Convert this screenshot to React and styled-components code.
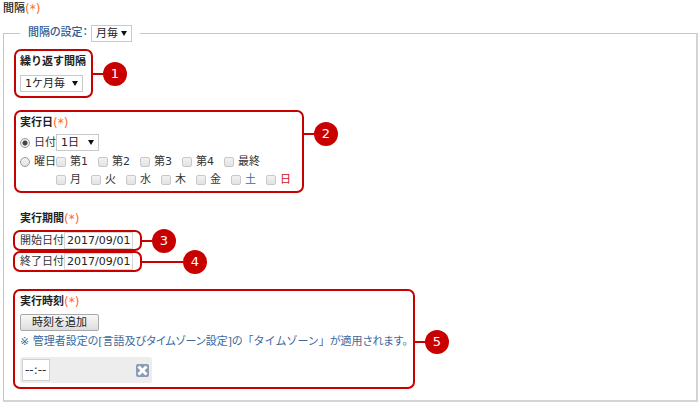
import React from "react";
import styled, { createGlobalStyle } from "styled-components";

const GlobalStyle = createGlobalStyle`
  * {
    box-sizing: border-box;
  }

  body {
    margin: 0;
    background: #ffffff;
  }

  body,
  input,
  select,
  button {
    font-family: "DejaVu Sans", "Noto Sans CJK JP", sans-serif;
    font-size: 11px;
    line-height: 16px;
    color: #333333;
  }
`;

const Page = styled.main`
  padding: 1px 2px 2px 3px;
`;

const Heading = styled.h2`
  display: flex;
  align-items: center;
  height: 16px;
  margin: 0;
  font-size: 11px;
  line-height: 16px;
  font-weight: ${(props) => props.$weight || 700};
  color: #222222;
`;

const Required = styled.span`
  font-weight: 400;
  font-size: 12px;
  color: #ff6a2b;
`;

const Panel = styled.fieldset`
  margin: 7px 0 0;
  min-width: 0;
  padding: 7px 16px 11px;
  border: 1px solid #c6c6c6;
  border-right: 2px solid #d4d4d4;
  border-bottom: 2px solid #d4d4d4;
`;

const Legend = styled.legend`
  display: flex;
  align-items: center;
  gap: 3px;
  height: 18px;
  padding: 0 8px;
  font-weight: 500;
  font-feature-settings: "palt";
  color: #2f5c92;
`;

const SelectWrap = styled.span`
  position: relative;
  display: inline-flex;
  width: ${(props) => props.$width};

  svg {
    position: absolute;
    top: 6px;
    right: 5px;
    width: 6px;
    height: 5px;
    pointer-events: none;
  }

  select {
    appearance: none;
    width: 100%;
    height: 17px;
    padding: 0 0 0 4px;
    border: 1px solid #c9c9c9;
    border-radius: 0;
    background: #ffffff;
    line-height: 15px;
    color: #222222;
  }
`;

const Callout = styled.section`
  position: relative;
  width: fit-content;
  margin-left: ${(props) => (props.$wide ? "-7px" : "-6px")};
  margin-top: ${(props) => props.$top || "0"};
  padding: ${(props) => props.$pad};
  border: 2px solid #c80000;
  border-radius: 7px;
`;

const Marker = styled.span`
  position: absolute;
  left: 100%;
  top: ${(props) => props.$at || "50%"};
  display: flex;
  align-items: center;
  transform: translateY(-50%);

  &::before {
    content: "";
    width: ${(props) => props.$line || "12px"};
    height: 2px;
    background: #c80000;
  }
`;

const Circle = styled.b`
  width: 24px;
  height: 24px;
  border-radius: 50%;
  background: #c80000;
  color: #ffffff;
  font-size: 13px;
  font-weight: 400;
  line-height: 24px;
  text-align: center;
`;

const Row = styled.div`
  display: flex;
  align-items: center;
  min-height: 16px;
  margin-top: ${(props) => props.$top || "0"};
`;

const Checks = styled.div`
  display: flex;
  gap: 10px;
  padding-left: ${(props) => (props.$indent ? "36px" : "0")};
`;

const Option = styled.label`
  display: flex;
  align-items: center;
  gap: 4px;
  height: 16px;
  color: ${(props) => props.$color || "#333333"};

  input {
    appearance: none;
    width: 10px;
    height: 10px;
    margin: 0;
    border: 1px solid #c8c8c8;
    border-radius: 2px;
    background: linear-gradient(#f2f2f2, #e2e2e2);
  }

  input[type="radio"] {
    border-color: #999999;
    border-radius: 50%;
  }

  input[type="radio"]:checked {
    background: radial-gradient(circle, #444444 2px, #eeeeee 3px);
  }
`;

const FieldLabel = styled.label`
  height: 16px;
`;

const DateInput = styled.input`
  width: 69px;
  height: 17px;
  padding: 0 2px;
  border: 1px solid #d6d6d6;
  color: #222222;
`;

const AddButton = styled.button`
  display: block;
  width: 79px;
  height: 17px;
  margin-top: 4px;
  padding: 0;
  border: 1px solid #a9a9a9;
  border-radius: 2px;
  background: linear-gradient(#f8f8f8, #dddddd);
  line-height: 14px;
  color: #222222;
`;

const Note = styled.p`
  margin: 3px 0 7px;
  font-feature-settings: "palt";
  color: #3c689c;
`;

const Term = styled.span`
  font-feature-settings: normal;
`;

const TimeRow = styled.div`
  display: flex;
  align-items: center;
  justify-content: space-between;
  width: 132px;
  height: 26px;
  padding: 0 3px 0 2px;
  border-radius: 3px;
  background: #ededed;
`;

const TimeInput = styled.input`
  width: 28px;
  height: 22px;
  padding: 0 2px;
  border: 1px solid #d0d0d0;
  font-size: 12px;
`;

const RemoveButton = styled.button`
  display: flex;
  padding: 0;
  border: none;
  background: none;
`;

const Select = ({ label, value, width }) => (
  <SelectWrap $width={width}>
    <select aria-label={label} defaultValue={value}>
      <option>{value}</option>
    </select>
    <svg viewBox="0 0 6 5" aria-hidden="true">
      <path d="M0 0H6L3 5Z" fill="#111111" />
    </svg>
  </SelectWrap>
);

const Title = ({ children, weight }) => (
  <Heading $weight={weight}>
    {children}
    <Required>(*)</Required>
  </Heading>
);

const Badge = ({ number, at, line }) => (
  <Marker $at={at} $line={line}>
    <Circle>{number}</Circle>
  </Marker>
);

const weeks = ["第1", "第2", "第3", "第4", "最終"];

const days = [
  { name: "月" },
  { name: "火" },
  { name: "水" },
  { name: "木" },
  { name: "金" },
  { name: "土", color: "#2f6fb5" },
  { name: "日", color: "#cc1020" },
];

const App = () => {
  return (
    <Page>
      <GlobalStyle />
      <Title weight={500}>間隔</Title>
      <Panel>
        <Legend>
          間隔の設定：
          <Select label="間隔の設定" value="月毎" width="41px" />
        </Legend>

        <Callout $pad="3px 5px 4px 4px">
          <Heading>繰り返す間隔</Heading>
          <Row $top="5px">
            <Select label="繰り返す間隔" value="1ケ月毎" width="63px" />
          </Row>
          <Badge number="1" />
        </Callout>

        <Callout $pad="3px 11px 3px 4px" $top="12px">
          <Title>実行日</Title>
          <Row $top="3px">
            <Option>
              <input type="radio" name="day" defaultChecked />
              日付
            </Option>
            <Select label="日付" value="1日" width="43px" />
          </Row>
          <Row $top="3px">
            <Option>
              <input type="radio" name="day" />
              曜日
            </Option>
            <Checks>
              {weeks.map((week) => (
                <Option key={week}>
                  <input type="checkbox" />
                  {week}
                </Option>
              ))}
            </Checks>
          </Row>
          <Row $top="2px">
            <Checks $indent>
              {days.map((day) => (
                <Option key={day.name} $color={day.color}>
                  <input type="checkbox" />
                  {day.name}
                </Option>
              ))}
            </Checks>
          </Row>
          <Badge number="2" at="28%" />
        </Callout>

        <Row $top="18px">
          <Title>実行期間</Title>
        </Row>
        <Callout $pad="0 7px 0 5px" $wide $top="3px">
          <Row>
            <FieldLabel htmlFor="start">開始日付</FieldLabel>
            <DateInput id="start" type="text" defaultValue="2017/09/01" />
          </Row>
          <Badge number="3" />
        </Callout>
        <Callout $pad="0 7px 0 5px" $wide>
          <Row>
            <FieldLabel htmlFor="end">終了日付</FieldLabel>
            <DateInput id="end" type="text" defaultValue="2017/09/01" />
          </Row>
          <Badge number="4" line="43px" />
        </Callout>

        <Callout $pad="3px 5px 4px 5px" $wide $top="17px">
          <Title>実行時刻</Title>
          <AddButton type="button">時刻を追加</AddButton>
          <Note>
            ※ 管理者設定の[言語及びタイムゾーン設定]の
            <Term>「タイムゾーン」</Term>
            が適用されます。
          </Note>
          <TimeRow>
            <TimeInput type="text" aria-label="時刻" defaultValue="--:--" />
            <RemoveButton type="button" aria-label="削除">
              <svg width="13" height="13" viewBox="0 0 13 13">
                <rect width="13" height="13" rx="2" fill="#8b9bb4" />
                <path
                  d="M2.5 2.5L10.5 10.5M10.5 2.5L2.5 10.5"
                  stroke="#ffffff"
                  strokeWidth="3"
                />
              </svg>
            </RemoveButton>
          </TimeRow>
          <Badge number="5" at="53%" />
        </Callout>
      </Panel>
    </Page>
  );
};

export default App;
